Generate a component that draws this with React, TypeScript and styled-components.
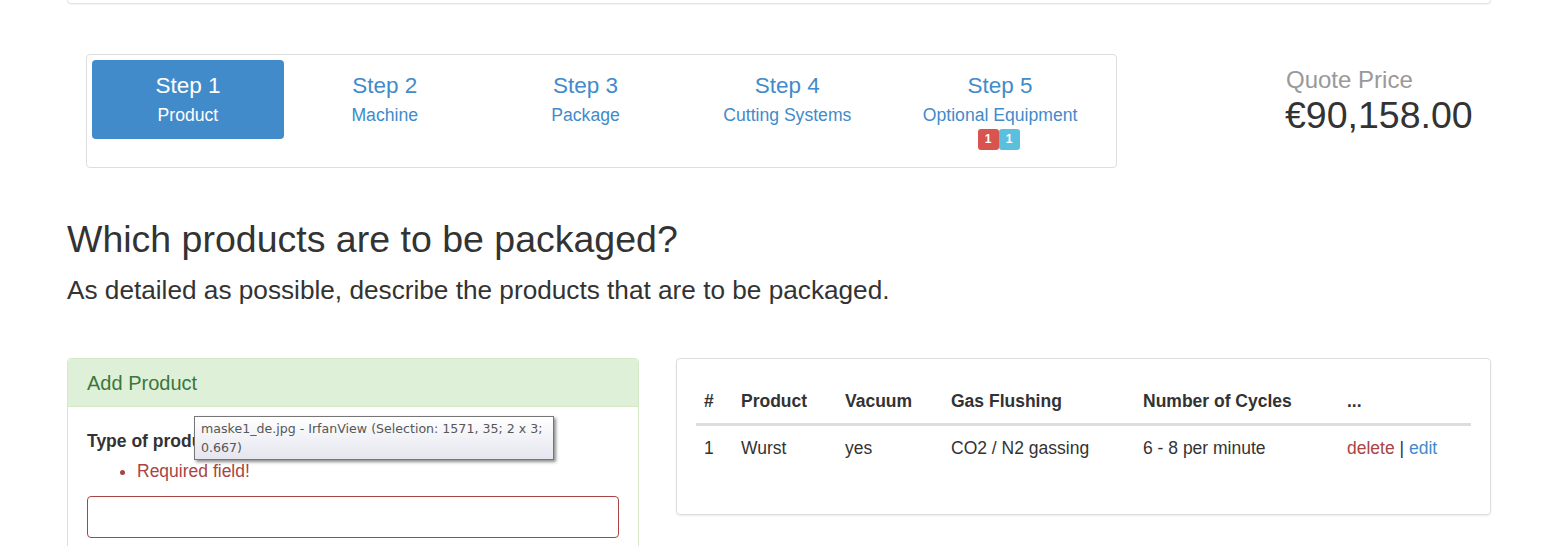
import React from "react";
import styled, { createGlobalStyle } from "styled-components";

const Global = createGlobalStyle`
  html, body { margin: 0; padding: 0; background: #fff; }
  body { font-family: "Liberation Sans", Arial, Helvetica, sans-serif; color: #333; }
  * { box-sizing: border-box; }
`;

const Page = styled.div`
  width: 1557px;
  height: 546px;
  overflow: hidden;
  padding: 0 66px 0 67px;
`;

const TopPanel = styled.div`
  height: 4px;
  border: 1px solid #e3e3e3;
  border-top: none;
  border-radius: 0 0 4px 4px;
  box-shadow: 0 1px 1px rgba(0, 0, 0, 0.04);
`;

const HeaderRow = styled.div`
  display: flex;
  align-items: flex-start;
  margin-top: 50px;
`;

const Stepper = styled.div`
  margin-left: 19px;
  width: 1031px;
  height: 114px;
  border: 1px solid #ddd;
  border-radius: 4px;
  padding: 5px;
  display: flex;
  gap: 2px;
`;

const Step = styled.a<{ $active?: boolean; $w: number }>`
  width: ${(p) => p.$w}px;
  height: 79px;
  border-radius: 4px;
  display: flex;
  flex-direction: column;
  align-items: center;
  padding-top: 13px;
  text-decoration: none;
  background: ${(p) => (p.$active ? "#428bca" : "transparent")};
  color: ${(p) => (p.$active ? "#fff" : "#428bca")};
`;

const StepTitle = styled.div`
  font-size: 22.5px;
  line-height: 26px;
`;

const StepSub = styled.div`
  font-size: 17.6px;
  line-height: 20px;
  margin-top: 6px;
`;

const Badges = styled.div`
  display: flex;
  margin-top: 4px;
  margin-left: -3px;
`;

const Badge = styled.span<{ $color: string }>`
  display: inline-block;
  width: 21px;
  height: 21px;
  line-height: 21px;
  text-align: center;
  font-size: 12px;
  font-weight: bold;
  color: #fff;
  background: ${(p) => p.$color};
  border-radius: 3px;
`;

const Quote = styled.div`
  margin-left: 169px;
  margin-top: 12px;
`;

const QuoteLabel = styled.div`
  font-size: 24px;
  line-height: 28px;
  color: #999;
`;

const QuotePrice = styled.div`
  font-size: 37.5px;
  line-height: 42px;
  color: #333;
  margin-left: -1px;
`;

const Title = styled.h1`
  font-size: 37.5px;
  font-weight: normal;
  line-height: 42px;
  margin: 50px 0 0 0;
`;

const Lead = styled.p`
  font-size: 26.2px;
  line-height: 32px;
  margin: 14px 0 0 0;
`;

const PanelsRow = styled.div`
  display: flex;
  gap: 37px;
  margin-top: 52px;
  align-items: flex-start;
`;

const FormPanel = styled.div`
  width: 573px;
  height: 200px;
  border: 1px solid #d6e9c6;
  border-radius: 4px;
`;

const FormHeading = styled.div`
  background: #dff0d8;
  color: #3c763d;
  font-size: 20px;
  line-height: 24px;
  padding: 12px 19px 11px;
  border-bottom: 1px solid #d6e9c6;
  border-radius: 3px 3px 0 0;
`;

const FormBody = styled.div`
  padding: 23px 19px;
  position: relative;
`;

const Label = styled.div`
  font-weight: bold;
  font-size: 17.5px;
  line-height: 22px;
`;

const Errors = styled.ul`
  margin: 9px 0 0 0;
  padding-left: 50px;
  color: #a94442;
  font-size: 17.5px;
  line-height: 20px;
`;

const Input = styled.div`
  margin-top: 15px;
  height: 42px;
  border: 1px solid #a94442;
  border-radius: 4px;
`;

const Tooltip = styled.div`
  position: absolute;
  left: 126px;
  top: 9px;
  width: 360px;
  height: 44px;
  padding: 2px 6px;
  white-space: nowrap;
  font-family: "DejaVu Sans", "Liberation Sans", sans-serif;
  font-size: 12.6px;
  line-height: 19px;
  color: #575757;
  background: linear-gradient(#ffffff, #e4e5ef);
  border: 1px solid #767676;
  box-shadow: 2px 2px 3px rgba(0, 0, 0, 0.45);
`;

const TablePanel = styled.div`
  width: 815px;
  height: 157px;
  border: 1px solid #ddd;
  border-radius: 4px;
  box-shadow: 0 1px 2px rgba(0, 0, 0, 0.08);
  padding: 20px 19px;
`;

const Table = styled.table`
  width: 775px;
  border-collapse: collapse;
  table-layout: fixed;
  font-size: 17.5px;
`;

const Th = styled.th<{ $w: number }>`
  width: ${(p) => p.$w}px;
  text-align: left;
  font-weight: bold;
  padding: 11px 8px 11px;
  line-height: 22px;
  border-bottom: 3px solid #ddd;
`;

const Td = styled.td`
  padding: 11px 8px;
  line-height: 22px;
`;

const Action = styled.a<{ $danger?: boolean }>`
  color: ${(p) => (p.$danger ? "#a94442" : "#428bca")};
  text-decoration: none;
`;

const steps = [
  { t: "Step 1", s: "Product", w: 192, active: true },
  { t: "Step 2", s: "Machine", w: 198 },
  { t: "Step 3", s: "Package", w: 200 },
  { t: "Step 4", s: "Cutting Systems", w: 200 },
  { t: "Step 5", s: "Optional Equipment", w: 222, badges: true },
];

export default function App() {
  return (
    <>
      <Global />
      <Page>
        <TopPanel />
        <HeaderRow>
          <Stepper>
            {steps.map((st) => (
              <Step key={st.t} $active={st.active} $w={st.w}>
                <StepTitle>{st.t}</StepTitle>
                <StepSub>{st.s}</StepSub>
                {st.badges && (
                  <Badges>
                    <Badge $color="#d9534f">1</Badge>
                    <Badge $color="#5bc0de">1</Badge>
                  </Badges>
                )}
              </Step>
            ))}
          </Stepper>
          <Quote>
            <QuoteLabel>Quote Price</QuoteLabel>
            <QuotePrice>€90,158.00</QuotePrice>
          </Quote>
        </HeaderRow>
        <Title>Which products are to be packaged?</Title>
        <Lead>As detailed as possible, describe the products that are to be packaged.</Lead>
        <PanelsRow>
          <FormPanel>
            <FormHeading>Add Product</FormHeading>
            <FormBody>
              <Label>Type of product</Label>
              <Errors>
                <li>Required field!</li>
              </Errors>
              <Input />
              <Tooltip>
                maske1_de.jpg - IrfanView (Selection: 1571, 35; 2 x 3;
                <br />
                0.667)
              </Tooltip>
            </FormBody>
          </FormPanel>
          <TablePanel>
            <Table>
              <thead>
                <tr>
                  <Th $w={37}>#</Th>
                  <Th $w={104}>Product</Th>
                  <Th $w={106}>Vacuum</Th>
                  <Th $w={192}>Gas Flushing</Th>
                  <Th $w={204}>Number of Cycles</Th>
                  <Th $w={132}>...</Th>
                </tr>
              </thead>
              <tbody>
                <tr>
                  <Td>1</Td>
                  <Td>Wurst</Td>
                  <Td>yes</Td>
                  <Td>CO2 / N2 gassing</Td>
                  <Td>6 - 8 per minute</Td>
                  <Td>
                    <Action $danger>delete</Action> | <Action>edit</Action>
                  </Td>
                </tr>
              </tbody>
            </Table>
          </TablePanel>
        </PanelsRow>
      </Page>
    </>
  );
}
